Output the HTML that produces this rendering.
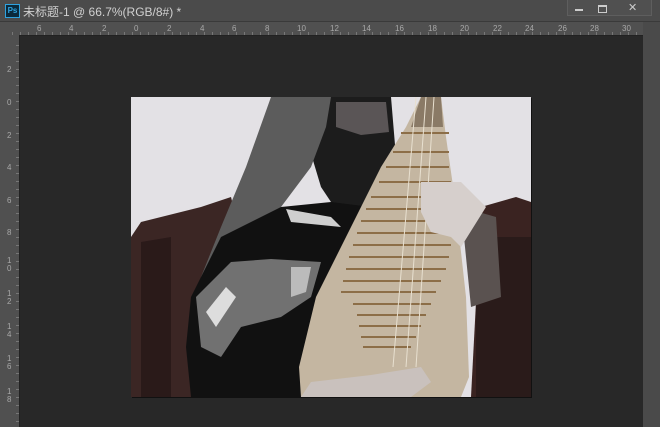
<!DOCTYPE html><html><head><style>
*{margin:0;padding:0}
body{width:660px;height:427px;background:#282828;position:relative;overflow:hidden;font-family:"Liberation Sans","Noto Sans CJK SC",sans-serif}
.title{position:absolute;left:0;top:0;width:660px;height:21px;background:#4b4b4b;border-bottom:1px solid #3a3a3a}
.ps{position:absolute;left:5px;top:4px;width:13px;height:12px;background:#0b2a3c;border:1px solid #2fa3e0;color:#2fa3e0;font-size:8px;line-height:12px;text-align:center;font-weight:bold}
.tt{position:absolute;left:23px;top:3px;color:#d0d0d0;font-size:12px}
.rul{position:absolute;left:0;top:22px;width:643px;height:13px;background:#505050 repeating-linear-gradient(90deg,transparent 0 7px,#777 7px 8px) 5px 10px/100% 3px no-repeat;border-bottom:1px solid #222}
.lr{position:absolute;left:0;top:35px;width:19px;height:392px;background:#505050 repeating-linear-gradient(180deg,transparent 0 7px,#777 7px 8px) 16px 3px/3px 100% no-repeat;border-right:1px solid #222}
.n{position:absolute;color:#a8a8a8;font-size:8px}
.sb{position:absolute;left:643px;top:22px;width:17px;height:405px;background:#4a4a4a}
.photo{position:absolute;left:131px;top:97px;width:400px;height:300px;box-shadow:1px 1px 0 #111}
</style></head><body>
<div class="title"><div class="ps">Ps</div><div class="tt">未标题-1 @ 66.7%(RGB/8#) *</div>
<div style="position:absolute;left:567px;top:0;width:83px;height:15px;background:#505050;border:1px solid #5e5e5e;border-top:none"></div>
<div style="position:absolute;left:575px;top:9px;width:8px;height:2px;background:#ccc"></div>
<div style="position:absolute;left:598px;top:5px;width:7px;height:5px;border:1px solid #ccc;border-top-width:2px"></div>
<div style="position:absolute;left:628px;top:1px;color:#ccc;font-size:11px">✕</div>
</div>
<div class="rul">
<span class="n" style="left:37px;top:2px">6</span><span class="n" style="left:69px;top:2px">4</span><span class="n" style="left:102px;top:2px">2</span><span class="n" style="left:134px;top:2px">0</span><span class="n" style="left:167px;top:2px">2</span><span class="n" style="left:200px;top:2px">4</span><span class="n" style="left:232px;top:2px">6</span><span class="n" style="left:265px;top:2px">8</span><span class="n" style="left:297px;top:2px">10</span><span class="n" style="left:330px;top:2px">12</span><span class="n" style="left:362px;top:2px">14</span><span class="n" style="left:395px;top:2px">16</span><span class="n" style="left:428px;top:2px">18</span><span class="n" style="left:460px;top:2px">20</span><span class="n" style="left:493px;top:2px">22</span><span class="n" style="left:525px;top:2px">24</span><span class="n" style="left:558px;top:2px">26</span><span class="n" style="left:590px;top:2px">28</span><span class="n" style="left:622px;top:2px">30</span>
</div>
<div class="lr">
<span class="n" style="left:7px;top:30px">2</span><span class="n" style="left:7px;top:63px">0</span><span class="n" style="left:7px;top:96px">2</span><span class="n" style="left:7px;top:128px">4</span><span class="n" style="left:7px;top:161px">6</span><span class="n" style="left:7px;top:193px">8</span>
<span class="n" style="left:7px;top:222px;line-height:8px">1<br>0</span><span class="n" style="left:7px;top:255px;line-height:8px">1<br>2</span><span class="n" style="left:7px;top:288px;line-height:8px">1<br>4</span><span class="n" style="left:7px;top:320px;line-height:8px">1<br>6</span><span class="n" style="left:7px;top:353px;line-height:8px">1<br>8</span>
</div>
<div class="sb"></div>
<svg class="photo" width="400" height="300" viewBox="0 0 400 300">
<rect width="400" height="300" fill="#e3e1e5"/>
<path d="M0 140 L10 125 L70 110 L100 100 L110 140 L100 300 L0 300Z" fill="#3b2624"/>
<path d="M10 145 L40 140 L40 300 L10 300Z" fill="#2a1a19"/>
<path d="M350 110 L385 100 L400 105 L400 300 L340 300Z" fill="#3a2321"/>
<path d="M345 140 L400 140 L400 300 L345 300Z" fill="#2a1b1a"/>
<path d="M170 0 L260 0 L265 60 L250 110 L210 120 L190 90 L175 40Z" fill="#1c1c1c"/>
<path d="M205 5 L255 5 L258 35 L230 38 L205 30Z" fill="#5a5556"/>
<path d="M140 0 L200 0 L195 30 L180 70 L150 110 L110 160 L80 200 L70 180 L90 130 L115 70Z" fill="#5c5c5c"/>
<path d="M60 200 L90 140 L150 110 L200 105 L240 110 L260 130 L200 300 L60 300 L55 250Z" fill="#111"/>
<path d="M65 200 L100 165 L140 162 L190 165 L180 200 L150 220 L110 230 L90 260 L70 250Z" fill="#8a8a8a" opacity=".8"/>
<path d="M75 215 L95 190 L105 200 L85 230Z" fill="#ddd"/>
<path d="M160 170 L180 170 L175 195 L160 200Z" fill="#bbb"/>
<path d="M155 112 L200 120 L210 130 L160 125Z" fill="#cfcfcf"/>
<path d="M330 110 L365 120 L370 200 L340 210Z" fill="#5a5250"/>
<path d="M290 0 L310 0 L315 40 L325 110 L335 200 L338 280 L330 300 L170 300 L168 270 L185 200 L215 140 L250 70 L275 30Z" fill="#c4b6a1"/>
<path d="M290 0 L310 0 L312 30 L280 30Z" fill="#8a7a66"/>
<path d="M270 36 L318 36 M262 55 L318 55 M255 70 L318 70 M248 85 L320 85 M240 100 L320 100 M235 112 L322 112 M230 124 L322 124 M226 136 L322 136 M222 148 L320 148 M218 160 L318 160 M215 172 L315 172 M212 184 L310 184 M210 195 L305 195 M222 207 L300 207 M226 218 L295 218 M228 229 L290 229 M230 240 L285 240 M232 250 L280 250" stroke="#8c6e48" stroke-width="2"/>
<path d="M285 0 L262 270 M295 0 L275 270 M303 0 L285 270" stroke="#e8e0d0" stroke-width="1"/>
<path d="M290 85 L330 85 L355 110 L330 150 L320 140 L300 135 L290 115Z" fill="#d6cfcc"/>
<path d="M180 285 L240 278 L290 270 L300 285 L280 300 L170 300Z" fill="#c9c1bd"/>
</svg>
</body></html>
